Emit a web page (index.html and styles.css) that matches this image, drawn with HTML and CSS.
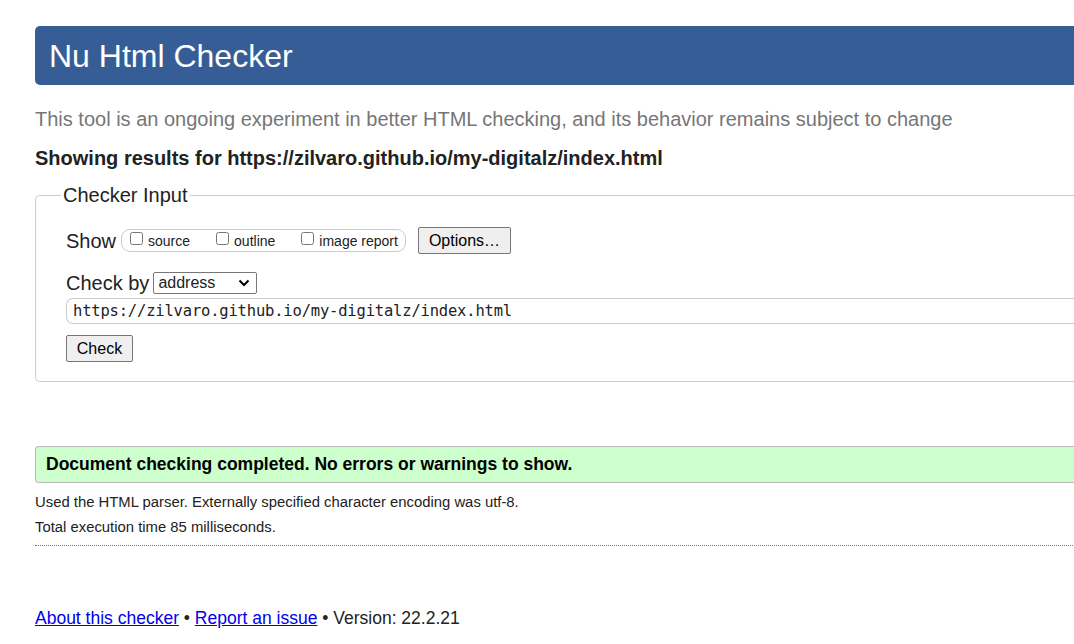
FILE: index.html
```html
<!DOCTYPE html>
<html>
<head>
<meta charset="utf-8">
<title>Nu Html Checker</title>
<link rel="stylesheet" href="styles.css">
</head>
<body>
<div class="page">
  <h1 class="masthead">Nu Html Checker</h1>
  <p class="tagline">This tool is an ongoing experiment in better HTML checking, and its behavior remains subject to change</p>
  <p class="results">Showing results for https://zilvaro.github.io/my-digitalz/index.html</p>
  <fieldset class="input-box">
    <legend class="legend">Checker Input</legend>
    <div class="row show-row">
      <span class="lbl">Show</span>
      <span class="opts">
        <label class="opt"><input type="checkbox" class="cb"><span>source</span></label>
        <label class="opt"><input type="checkbox" class="cb"><span>outline</span></label>
        <label class="opt"><input type="checkbox" class="cb"><span>image report</span></label>
      </span>
      <button class="btn btn-options">Options…</button>
    </div>
    <div class="row by-row">
      <span class="lbl">Check by</span>
      <span class="select">address<svg class="chev" width="12" height="8" viewBox="0 0 12 8"><path d="M1.5 1.5 L6 6 L10.5 1.5" fill="none" stroke="#000" stroke-width="2"/></svg></span>
    </div>
    <div class="url">https://zilvaro.github.io/my-digitalz/index.html</div>
    <button class="btn btn-check">Check</button>
  </fieldset>
  <p class="success">Document checking completed. No errors or warnings to show.</p>
  <p class="details first">Used the HTML parser. Externally specified character encoding was utf-8.</p>
  <p class="details">Total execution time 85 milliseconds.</p>
  <hr class="dots">
  <p class="footer"><a href="#">About this checker</a> • <a href="#">Report an issue</a> • Version: 22.2.21</p>
</div>
</body>
</html>
```

FILE: styles.css
```css
html, body {
  margin: 0;
  padding: 0;
  overflow: hidden;
  background: #fff;
}
body {
  font-family: "Liberation Sans", Arial, sans-serif;
  color: #222;
}
.page {
  width: 1100px;
  padding: 26px 0 0 35px;
}
.masthead {
  margin: 0;
  height: 59px;
  box-sizing: border-box;
  padding: 11px 0 0 14px;
  background: #365d95;
  color: #fff;
  font-size: 32px;
  font-weight: normal;
  line-height: 38px;
  border-radius: 5px 0 0 5px;
}
.tagline {
  margin: 21px 0 0 0;
  font-size: 20px;
  line-height: 26px;
  color: #767676;
}
.results {
  margin: 14px 0 0 0;
  font-size: 20px;
  font-weight: bold;
  line-height: 24px;
  color: #222;
}
.input-box {
  margin: 13px 0 0 0;
  padding: 6px 0 19px 30px;
  border: 1px solid #ccc;
  border-right: none;
  border-radius: 5px 0 0 5px;
}
.legend {
  padding: 0 2px;
  margin-left: -5px;
  font-size: 20px;
  line-height: 24px;
  color: #222;
}
.row {
  display: flex;
  align-items: center;
}
.lbl {
  font-size: 20px;
  line-height: 24px;
  color: #222;
}
.show-row {
  margin-top: 14px;
}
.opts {
  display: flex;
  align-items: center;
  gap: 26px;
  margin-left: 5px;
  height: 23px;
  padding: 0 7px 0 8px;
  border: 1px solid #ccc;
  border-radius: 9px;
  box-sizing: border-box;
}
.opt {
  display: flex;
  align-items: center;
  font-size: 14px;
  color: #222;
}
.cb {
  margin: 0 5px 0 0;
  width: 13px;
  height: 13px;
  position: relative;
  top: -2px;
}
.btn {
  font-family: "Liberation Sans", Arial, sans-serif;
  font-size: 16px;
  background: #efefef;
  border: 1px solid #767676;
  border-radius: 2px;
  color: #000;
  padding: 0 10px;
}
.btn-options {
  margin-left: 12px;
  height: 27px;
  width: 93px;
}
.by-row {
  margin-top: 17px;
}
.select {
  display: inline-flex;
  align-items: center;
  justify-content: space-between;
  margin-left: 4px;
  width: 104px;
  height: 22px;
  box-sizing: border-box;
  padding: 0 6px 0 4px;
  border: 1px solid #767676;
  border-radius: 2px;
  font-size: 16px;
}
.url {
  margin-top: 3px;
  height: 26px;
  box-sizing: border-box;
  border: 1px solid #ccc;
  border-right: none;
  border-radius: 7px 0 0 7px;
  padding: 0 0 0 6px;
  font-family: "DejaVu Sans Mono", "Liberation Mono", monospace;
  font-size: 15.5px;
  line-height: 24px;
  color: #222;
  letter-spacing: -0.012em;
}
.btn-check {
  margin-top: 11px;
  height: 27px;
  width: 67px;
  padding: 0;
}
.success {
  margin: 64px 0 0 0;
  height: 37px;
  box-sizing: border-box;
  padding: 0 0 0 10px;
  background: #ccffcc;
  border: 1px solid #bbb;
  border-right: none;
  border-radius: 4px 0 0 4px;
  font-size: 17.5px;
  font-weight: bold;
  line-height: 35px;
  color: #000;
}
.details {
  margin: 0;
  font-size: 14.85px;
  line-height: 25px;
  color: #222;
}
.details.first {
  margin-top: 7px;
}
.dots {
  margin: 5px 0 0 0;
  border: none;
  border-top: 1px dotted #777;
  height: 0;
}
.footer {
  margin: 61px 0 0 0;
  font-size: 17.5px;
  line-height: 22px;
  color: #222;
}
.footer a {
  color: #0000ee;
}
```
